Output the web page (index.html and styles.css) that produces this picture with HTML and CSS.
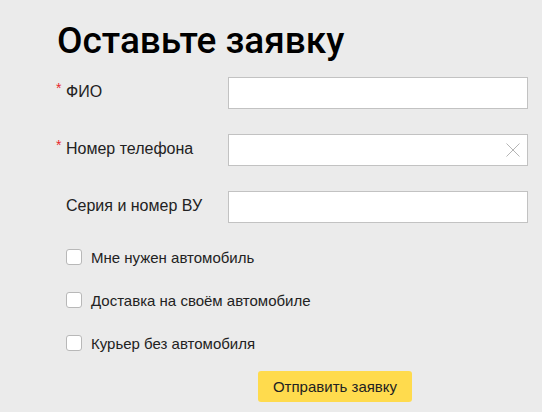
FILE: index.html
```html
<!DOCTYPE html>
<html lang="ru">
<head>
<meta charset="utf-8">
<link rel="stylesheet" href="styles.css">
</head>
<body>
<div class="page">
  <h1 class="title">Оставьте заявку</h1>
  <form class="form">
    <div class="field">
      <label class="label"><span class="req">*</span>ФИО</label>
      <div class="input"></div>
    </div>
    <div class="field">
      <label class="label"><span class="req">*</span>Номер телефона</label>
      <div class="input">
        <svg class="clear" width="14" height="14" viewBox="0 0 14 14"><path d="M0.5 0.5L13.5 13.5M13.5 0.5L0.5 13.5" stroke="#b5b5b5" stroke-width="1" fill="none"/></svg>
      </div>
    </div>
    <div class="field">
      <label class="label"><span class="req"></span>Серия и номер ВУ</label>
      <div class="input"></div>
    </div>
    <div class="checks">
      <label class="check"><span class="box"></span>Мне нужен автомобиль</label>
      <label class="check"><span class="box"></span>Доставка на своём автомобиле</label>
      <label class="check"><span class="box"></span>Курьер без автомобиля</label>
    </div>
    <div class="actions">
      <button type="button" class="submit">Отправить заявку</button>
    </div>
  </form>
</div>
</body>
</html>
```
FILE: styles.css
```css
html, body {
  margin: 0;
  padding: 0;
  background: #ebebeb;
}
body {
  font-family: "Liberation Sans", Arial, sans-serif;
  color: #222;
  width: 542px;
  height: 412px;
  overflow: hidden;
}
.page {
  padding: 19px 0 0 56px;
}
.title {
  margin: 0 0 0 1px;
  font-family: Roboto, sans-serif;
  font-weight: 500;
  font-size: 37px;
  line-height: 44px;
  color: #000;
  letter-spacing: 0;
}
.form {
  margin-top: 14px;
  display: flex;
  flex-direction: column;
}
.field {
  display: flex;
  align-items: center;
  height: 32px;
  margin-bottom: 25px;
}
.label {
  width: 172px;
  font-size: 16px;
  color: #222;
  display: flex;
  align-items: flex-start;
  margin-top: -3px;
}
.req {
  width: 10px;
  color: #e8262b;
  font-size: 14px;
  line-height: 12px;
  margin-top: -1px;
}
.input {
  box-sizing: border-box;
  width: 300px;
  height: 32px;
  background: #fff;
  border: 1px solid #c2c2c2;
  position: relative;
  display: flex;
  align-items: center;
  justify-content: flex-end;
  padding-right: 7px;
}
.checks {
  margin-top: 1px;
  padding-left: 10px;
  display: flex;
  flex-direction: column;
  gap: 27px;
}
.check {
  display: flex;
  align-items: center;
  height: 16px;
  font-size: 15px;
  color: #222;
}
.box {
  box-sizing: border-box;
  width: 16px;
  height: 16px;
  border: 1px solid #b8b8b8;
  border-radius: 3px;
  background: #fff;
  margin-right: 9px;
}
.actions {
  padding-left: 202px;
  margin-top: 20px;
}
.submit {
  width: 154px;
  height: 31px;
  border: 0;
  border-radius: 3px;
  background: #ffdb4d;
  font-family: "Liberation Sans", Arial, sans-serif;
  font-size: 15px;
  color: #222;
  padding: 0;
}
```
